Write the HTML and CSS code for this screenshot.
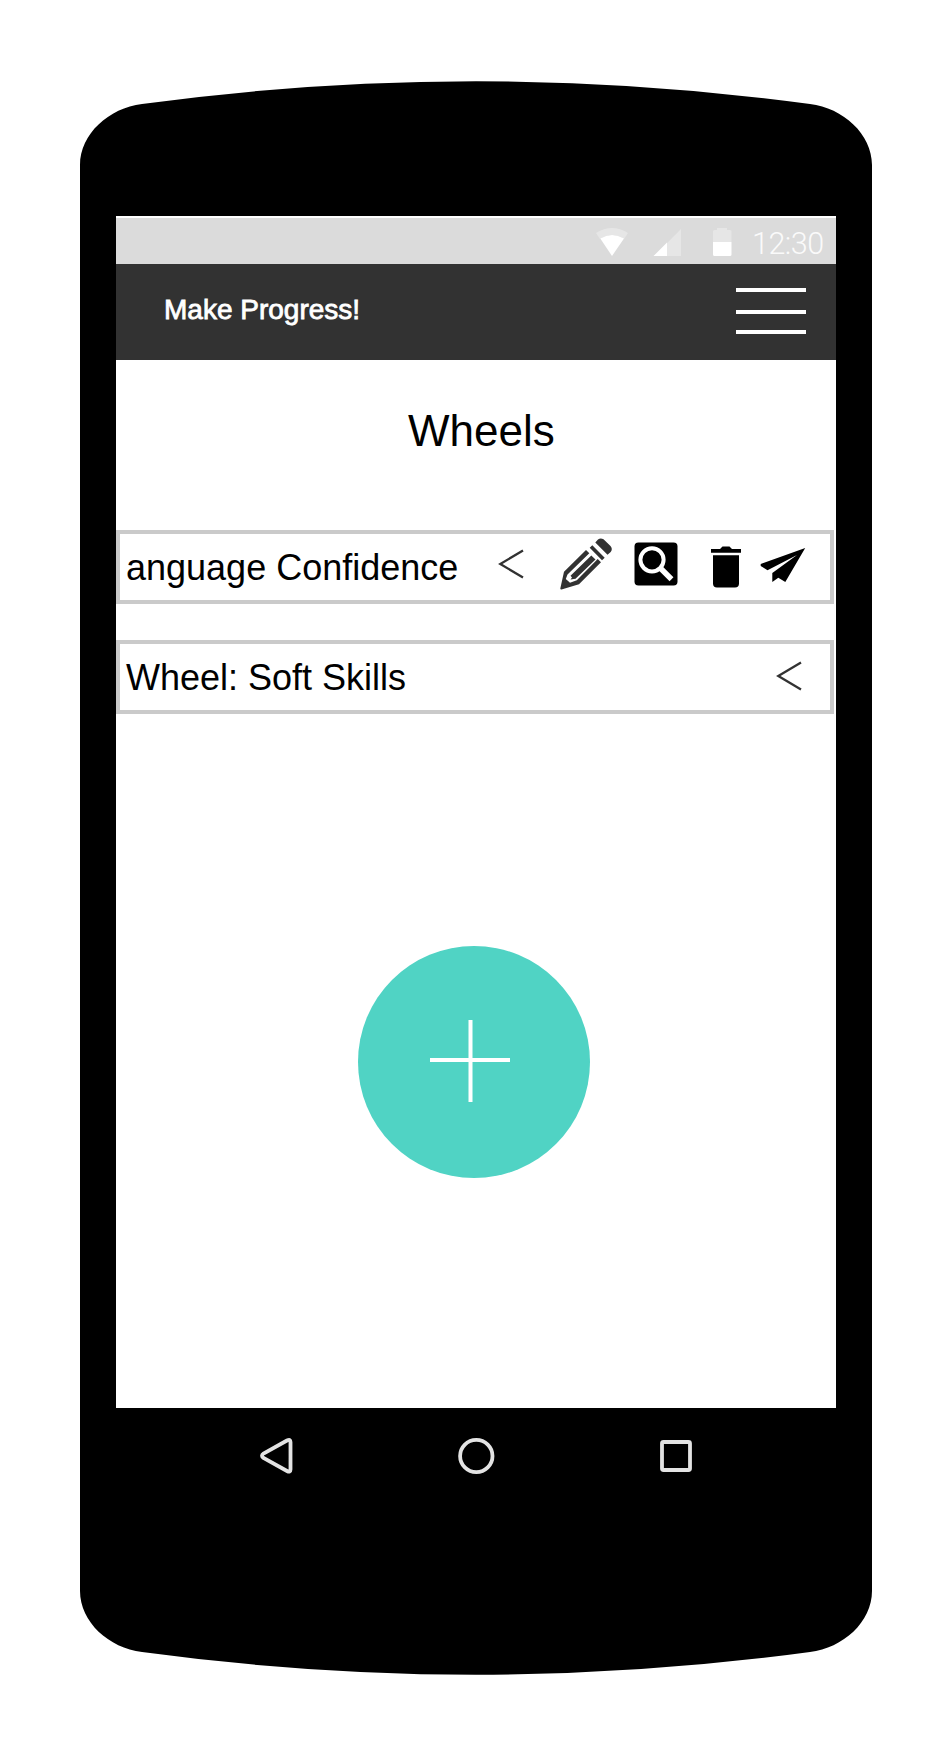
FILE: index.html
```html
<!DOCTYPE html>
<html lang="en">
<head>
<meta charset="utf-8">
<title>Make Progress!</title>
<link rel="stylesheet" href="styles.css">
</head>
<body>
<div class="phone">
  <svg class="shell" viewBox="80 81 792 1594" aria-hidden="true"><path d="M80 165C80 134 109 108 142 104Q309 81.300 476 81.300T810 104C843 108 872 134 872 165V1591C872 1622 843 1648 810 1652Q643 1674.700 476 1674.700T142 1652C109 1648 80 1622 80 1591Z"/></svg>
  <main class="screen">
    <div class="status">
      <svg class="status-icons" viewBox="590 218 150 46" width="150" height="46">
        <path class="dim" d="M596 233Q612 223 628 233L624 239Q612 231.500 600 239ZM681 229V256H667V243ZM713 242V231.500Q713 230 714.500 230H717V228H727V230H730Q731.500 230 731.500 231.500V242Z"/>
        <path class="lit" d="M600.300 238.500Q612 231.500 624 238.500L612 256ZM653.500 256L667 242.500V256ZM713 242H731.500V254.500Q731.500 256 730 256H714.500Q713 256 713 254.500Z"/>
      </svg>
      <span class="clock">12:30</span>
    </div>
    <header class="bar">
      <span class="brand">Make Progress!</span>
      <svg class="menu" viewBox="0 0 70 46" width="70" height="46"><path d="M0 0H70V4H0ZM0 22H70V26H0ZM0 42H70V46H0Z"/></svg>
    </header>
    <h1 class="title">Wheels</h1>
    <div class="rows">
      <div class="row">
        <span class="label">anguage Confidence</span>
        <div class="actions">
          <svg viewBox="495 534 32 66" width="32" height="66"><path class="chevron" d="M523 550.500L500.300 564L523 577.500"/></svg>
          <svg viewBox="556 534 60 66" width="60" height="66">
            <path class="pencil" d="M586 550L564 571.700L560.300 588.500Q560.300 589.700 561.500 589.500L579 584.300L601 562.300L597.700 559L576.800 580.300L570 582.700L565.800 579L567.500 574.500L589.300 553.300Z"/>
            <path class="pencil" d="M591.300 555.500L595.500 559.500L575.500 578.800L570.500 579.500L572 577.500L570.500 575.800Z"/>
            <path class="pencil" d="M589.700 547.700L592.300 545.300L604.700 557.700L602 560.200ZM595.300 542.500L598 539.500Q600.500 537.700 603.500 539.300L610.500 546Q613 549 610.700 552L607.500 554.700Z"/>
          </svg>
          <svg viewBox="630 534 52 66" width="52" height="66"><rect x="634.500" y="542.500" width="43" height="43" rx="4"/><circle class="lens" cx="652" cy="559.800" r="11.600"/><path class="handle" d="M660 567.800L671.500 579.300"/></svg>
          <svg viewBox="707 534 38 66" width="38" height="66"><path d="M711 549H720L722.500 546.500H729.500L732 549H741V552.700H711ZM713 555.300H739V583.500Q739 587.500 735 587.500H717Q713 587.500 713 583.500Z"/></svg>
          <svg viewBox="757 534 52 66" width="52" height="66"><path d="M805.200 548L760.700 564V566L767.500 570.200L797 555L772.300 573V582L778.300 577.800L785.300 582Z"/></svg>
        </div>
      </div>
      <div class="row">
        <span class="label">Wheel: Soft Skills</span>
        <svg class="single" viewBox="773 644 32 66" width="32" height="66"><path class="chevron" d="M801 662.500L778.300 676L801 689.500"/></svg>
      </div>
    </div>
    <button class="add" aria-label="Add wheel"><svg viewBox="0 0 80 82" width="80" height="82"><path d="M0 38H80V42H0ZM38.500 0H42.500V82H38.500Z"/></svg></button>
  </main>
  <nav class="nav">
    <svg viewBox="258 1436 38 40" width="38" height="40"><path d="M287 1440.500L263.500 1453.500Q260.500 1455.500 263.500 1458L287 1471Q290.500 1473 290.500 1469.500V1442Q290.500 1438.500 287 1440.500Z"/></svg>
    <svg viewBox="456 1436 40 40" width="40" height="40"><circle cx="476.300" cy="1456" r="16.200"/></svg>
    <svg viewBox="656 1436 40 40" width="40" height="40"><rect x="662" y="1442" width="28" height="28" rx="1.500"/></svg>
  </nav>
</div>
</body>
</html>
```
FILE: styles.css
```css
body {
  margin: 0;
  background: #fff;
  font-family: "Liberation Sans", Arial, sans-serif;
  color: #000;
}
.phone {
  box-sizing: border-box;
  position: relative;
  width: 792px;
  height: 1594px;
  margin: 81px 80px;
  padding: 135px 36px 0;
}
.shell {
  position: absolute;
  inset: 0;
  width: 792px;
  height: 1594px;
  z-index: -1;
}
.screen {
  box-sizing: border-box;
  width: 720px;
  height: 1192px;
  padding-top: 2px;
  background: #fff;
}
.status {
  display: flex;
  height: 46px;
  padding-left: 474px;
  background: #dbdbdb;
}
.dim { fill: #e6e6e6; }
.lit { fill: #fff; }
.clock {
  margin-left: 12px;
  font: 300 30.500px/52px Roboto, sans-serif;
  letter-spacing: -0.500px;
  color: #fafafa;
}
.bar {
  box-sizing: border-box;
  display: flex;
  align-items: flex-start;
  justify-content: space-between;
  height: 96px;
  padding: 24px 30px 0 48px;
  background: #323232;
}
.brand {
  font-size: 28px;
  line-height: 44px;
  color: #fff;
  -webkit-text-stroke: 0.800px #fff;
}
.menu { fill: #fff; }
.title {
  margin: 0 0 0 292px;
  padding-top: 45px;
  height: 125px;
  font-size: 44px;
  font-weight: 400;
  line-height: 52px;
}
.rows {
  display: flex;
  flex-direction: column;
  gap: 36px;
  width: 718px;
}
.row {
  box-sizing: border-box;
  display: flex;
  justify-content: space-between;
  height: 74px;
  padding-left: 6px;
  border: 4px solid #cacaca;
}
.label {
  font-size: 36px;
  line-height: 67px;
  white-space: nowrap;
}
.actions {
  display: grid;
  grid-template-columns: 61px 74px 77px 50px 73px;
}
.single { margin-right: 25px; }
.chevron {
  fill: none;
  stroke: #323232;
  stroke-width: 2.300;
}
.pencil { fill: #323232; }
.lens {
  fill: none;
  stroke: #fff;
  stroke-width: 4;
}
.handle {
  stroke: #fff;
  stroke-width: 5.500;
}
.add {
  display: flex;
  box-sizing: border-box;
  width: 232px;
  height: 232px;
  margin: 232px 0 0 242px;
  padding: 74px 0 0 72px;
  border: 0;
  border-radius: 50%;
  background: #50d3c4;
}
.add svg { fill: #fff; }
.nav {
  display: flex;
  justify-content: space-between;
  padding: 28px 140px 0 142px;
  fill: none;
  stroke: #e3e3e3;
  stroke-width: 3.800;
}
```
